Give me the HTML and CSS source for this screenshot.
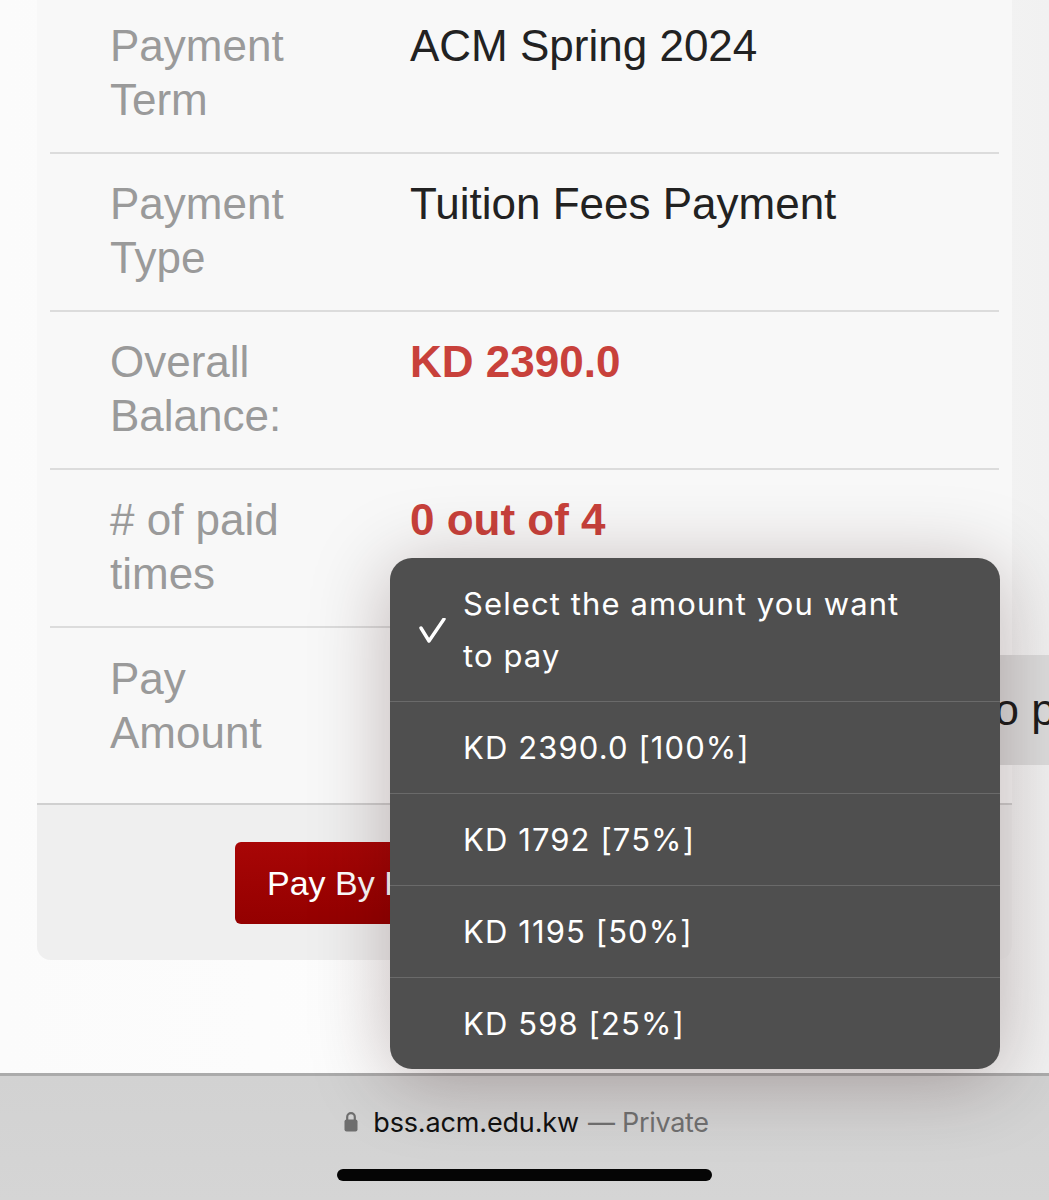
FILE: index.html
```html
<!DOCTYPE html>
<html lang="en">
<head>
<meta charset="utf-8">
<title>Payment</title>
<link rel="stylesheet" href="styles.css">
</head>
<body>
<div class="page">
  <main class="content">
    <section class="card">
      <div class="rows">
        <div class="row">
          <div class="label">Payment<br>Term</div>
          <div class="value">ACM Spring 2024</div>
        </div>
        <div class="row">
          <div class="label">Payment<br>Type</div>
          <div class="value">Tuition Fees Payment</div>
        </div>
        <div class="row">
          <div class="label">Overall<br>Balance:</div>
          <div class="value red">KD 2390.0</div>
        </div>
        <div class="row">
          <div class="label"># of paid<br>times</div>
          <div class="value red">0 out of 4</div>
        </div>
        <div class="row row-select">
          <div class="label">Pay<br>Amount</div>
          <div class="select">Select the amount you want to pay</div>
        </div>
      </div>
      <div class="card-footer">
        <button class="pay-btn">Pay By KNET</button>
      </div>
    </section>
  </main>

  <div class="menu">
    <div class="menu-item checked">
      <svg class="check" width="28" height="26" viewBox="0 0 28 26"><polyline points="2,10 10,23 25,1" fill="none" stroke="#fff" stroke-width="3.4" stroke-linecap="round" stroke-linejoin="round"/></svg>
      <span>Select the amount you want<br>to pay</span>
    </div>
    <div class="menu-item">KD 2390.0 [100%]</div>
    <div class="menu-item">KD 1792 [75%]</div>
    <div class="menu-item">KD 1195 [50%]</div>
    <div class="menu-item">KD 598 [25%]</div>
  </div>

  <footer class="safari-bar">
    <div class="address">
      <svg class="lock" width="14" height="21" viewBox="0 0 14 21"><path d="M3.2 9V6a3.8 3.8 0 0 1 7.6 0v3" fill="none" stroke="#6f6f6f" stroke-width="2.2"/><rect x="0.5" y="8.5" width="13" height="12" rx="2" fill="#6f6f6f"/></svg>
      <span class="host">bss.acm.edu.kw</span>
      <span class="private">— Private</span>
    </div>
    <div class="home-indicator"></div>
  </footer>
</div>
</body>
</html>
```

FILE: styles.css
```css
html, body {
  margin: 0;
  padding: 0;
  overflow: hidden;
}

body {
  background: #fcfcfc;
  font-family: "Liberation Sans", Arial, sans-serif;
}

.page {
  position: relative;
  height: 1200px;
  display: flex;
  flex-direction: column;
}

.content {
  flex: 1;
  padding: 0 37px;
  background: linear-gradient(90deg, #fbfbfb 0%, #fdfdfd 50%, #f1f1f1 100%);
}

.card {
  margin-top: -6px;
  background: #f8f8f8;
  border-radius: 0 0 14px 14px;
}

.rows {
  margin: 0 13px;
}

.row {
  display: flex;
  align-items: flex-start;
  padding: 23px 0 25px 60px;
  border-top: 2px solid #dcdcdc;
  font-size: 44px;
  line-height: 54px;
}

.row:first-child {
  border-top: none;
  padding-top: 25px;
}

.label {
  width: 300px;
  flex-shrink: 0;
  color: #9a9a9a;
}

.value {
  color: #222;
}

.value.red {
  color: #c8413b;
  font-weight: bold;
}

.row-select {
  padding-top: 24px;
  padding-bottom: 38px;
}

.select {
  flex-shrink: 0;
  width: max-content;
  margin-top: 3px;
  height: 110px;
  line-height: 110px;
  padding: 0 30px 0 17px;
  background: #dcdcdc;
  border-radius: 6px;
  color: #1d1d1d;
  white-space: nowrap;
}

.card-footer {
  border-top: 2px solid #d0d0d0;
  background: #efefef;
  border-radius: 0 0 14px 14px;
  padding: 37px 0 36px 198px;
}

.pay-btn {
  display: block;
  height: 82px;
  padding: 0 32px;
  border: none;
  border-radius: 6px;
  background: linear-gradient(180deg, #a80606 0%, #940000 100%);
  color: #fff;
  font-family: "Liberation Sans", Arial, sans-serif;
  font-size: 34px;
}

.menu {
  position: absolute;
  left: 390px;
  top: 558px;
  width: 610px;
  background: #4f4f4f;
  border-radius: 22px;
  overflow: hidden;
  box-shadow: 0 10px 80px rgba(40, 0, 0, 0.28);
  font-family: Inter, "Open Sans", sans-serif;
  color: #fff;
  font-size: 31px;
  letter-spacing: 1.1px;
}

.menu-item {
  position: relative;
  height: 91px;
  line-height: 91px;
  padding-left: 73px;
  border-top: 1px solid #6a6a6a;
}

.menu-item:first-child {
  border-top: none;
}

.menu-item.checked {
  height: 143px;
  line-height: 52px;
  display: flex;
  align-items: center;
}

.check {
  position: absolute;
  left: 29px;
  top: 60px;
}

.safari-bar {
  height: 124px;
  border-top: 3px solid #ababab;
  background: linear-gradient(180deg, #d2d2d2 0%, #d5d5d5 100%);
  display: flex;
  flex-direction: column;
  align-items: center;
}

.address {
  margin-top: 30px;
  display: flex;
  align-items: center;
  gap: 15px;
  font-family: Inter, "Open Sans", sans-serif;
  font-size: 27px;
  margin-left: 4px;
}

.lock {
  margin-top: -2px;
}

.host {
  color: #111;
  letter-spacing: -0.15px;
}

.private {
  color: #707070;
  margin-left: -6px;
  letter-spacing: -0.3px;
}

.home-indicator {
  margin-top: 30px;
  width: 375px;
  height: 12px;
  border-radius: 6px;
  background: #050505;
}
```
